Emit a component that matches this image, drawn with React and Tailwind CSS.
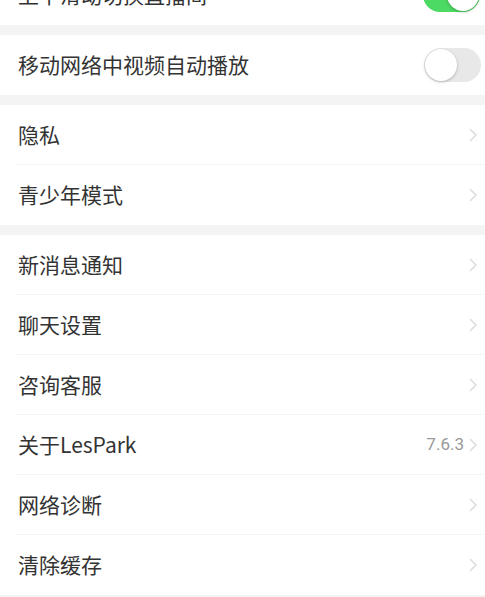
import React from "react";

const Chevron = () => (
  <svg width="10" height="16" viewBox="0 0 10 16" className="shrink-0">
    <path d="M2.5 2.5 L8 8 L2.5 13.5" fill="none" stroke="#dcdcdc" strokeWidth="1.5" strokeLinecap="round" strokeLinejoin="round" />
  </svg>
);

const Toggle = ({ on }) => (
  <div
    className={`relative w-[57px] h-[34px] rounded-full shrink-0 ${on ? "bg-[#4cd964]" : "bg-[#e8e8e8]"}`}
  >
    <div
      className={`absolute top-[1px] w-[32px] h-[32px] rounded-full bg-white shadow-[0_1px_3px_rgba(0,0,0,0.25)] ${on ? "right-[1px]" : "left-[1px]"}`}
    />
  </div>
);

const Row = ({ label, right, last }) => (
  <div className="relative h-[60px] flex items-center justify-between pl-[18px] pr-[7px] bg-white">
    <span className="text-[21px] text-[#333]">{label}</span>
    <div className="flex items-center gap-[4px]">{right}</div>
    {!last && <div className="absolute left-[15px] right-0 bottom-0 h-px bg-[#f5f5f5]" />}
  </div>
);

const Section = ({ children }) => <div className="bg-white">{children}</div>;

const Gap = () => <div className="h-[10px] bg-[#f4f4f4]" />;

export default function App() {
  return (
    <div
      className="w-[485px] h-[597px] overflow-hidden bg-[#f4f4f4]"
      style={{ fontFamily: '"Noto Sans CJK SC", "Noto Sans", sans-serif' }}
    >
      <div className="-mt-[35px]">
        <Section>
          <Row label="上下滑动切换直播间" right={<div className="mr-[-2px]"><Toggle on /></div>} last />
        </Section>
        <Gap />
        <Section>
          <Row label="移动网络中视频自动播放" right={<div className="mr-[-3px]"><Toggle /></div>} last />
        </Section>
        <Gap />
        <Section>
          <Row label="隐私" right={<Chevron />} />
          <Row label="青少年模式" right={<Chevron />} last />
        </Section>
        <Gap />
        <Section>
          <Row label="新消息通知" right={<Chevron />} />
          <Row label="聊天设置" right={<Chevron />} />
          <Row label="咨询客服" right={<Chevron />} />
          <Row
            label="关于LesPark"
            right={
              <>
                <span className="text-[17px] text-[#999]" style={{ fontFamily: '"Roboto", "Noto Sans", sans-serif' }}>
                  7.6.3
                </span>
                <Chevron />
              </>
            }
          />
          <Row label="网络诊断" right={<Chevron />} />
          <Row label="清除缓存" right={<Chevron />} last />
        </Section>
        <Gap />
      </div>
    </div>
  );
}
